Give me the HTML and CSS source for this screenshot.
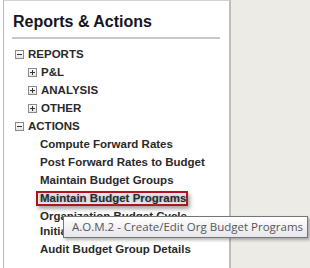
FILE: index.html
```html
<!DOCTYPE html>
<html lang="en">
<head>
    <meta charset="UTF-8">
    <title>Reports &amp; Actions</title>
    <link rel="stylesheet" href="styles.css">
</head>
<body>
    <div class="layout">
        <div class="sidebar">
            <h1>Reports &amp; Actions</h1>

            <ul class="tree">
                <li>
                    <div class="node"><span class="toggle minus"></span>REPORTS</div>
                    <ul>
                        <li><div class="node"><span class="toggle plus"></span>P&amp;L</div></li>
                        <li><div class="node"><span class="toggle plus"></span>ANALYSIS</div></li>
                        <li><div class="node"><span class="toggle plus"></span>OTHER</div></li>
                    </ul>
                </li>
                <li>
                    <div class="node"><span class="toggle minus"></span>ACTIONS</div>
                    <ul class="actions">
                        <li><a href="#">Compute Forward Rates</a></li>
                        <li><a href="#">Post Forward Rates to Budget</a></li>
                        <li><a href="#">Maintain Budget Groups</a></li>
                        <li class="has-tip">
                            <a href="#" class="selected">Maintain Budget Programs</a>
                            <div class="tooltip">A.O.M.2 - Create/Edit Org Budget Programs</div>
                        </li>
                        <li><a href="#">Organization Budget Cycle Initiation</a></li>
                        <li><a href="#">Audit Budget Group Details</a></li>
                    </ul>
                </li>
            </ul>
        </div>
        <div class="main"></div>
    </div>
</body>
</html>
```

FILE: styles.css
```css
html,
body {
    height: 100%;
}

body {
    margin: 0;
    padding-left: 3px;
    background-color: #fff;
    font-family: "Liberation Sans", Arial, sans-serif;
    color: #222;
}

.layout {
    display: flex;
    height: 100%;
}

.sidebar {
    width: 208px;
    padding: 0 9px 0 8px;
    border-left: 1px solid #b8b8b8;
    border-top: 1px solid #d4d4d4;
    border-right: 2px solid #bdbdbd;
    box-sizing: content-box;
}

.main {
    flex: 1;
    background-color: #ecebe6;
}

h1 {
    margin: 0;
    padding: 11px 0 6px 1px;
    font-size: 16px;
    line-height: 19px;
    font-weight: bold;
    color: #15151f;
    border-bottom: 2px solid #c8c8c8;
}

.tree,
.tree ul {
    list-style: none;
    margin: 0;
    padding: 0;
}

.tree {
    margin-top: 6px;
    font-size: 11.5px;
    font-weight: bold;
    color: #2a2a2a;
}

.tree ul {
    padding-left: 13px;
}

.node {
    display: flex;
    align-items: center;
    height: 18px;
    padding-left: 3px;
}

/* plus / minus boxes */
.toggle {
    position: relative;
    width: 7px;
    height: 7px;
    margin-right: 4px;
    border: 1px solid #8a8a8a;
    background: linear-gradient(#fff, #e4e4e4);
}

.toggle::before,
.toggle::after {
    content: "";
    position: absolute;
    background-color: #333;
}

.toggle::before {
    left: 1px;
    top: 3px;
    width: 5px;
    height: 1px;
}

.plus::after {
    left: 3px;
    top: 1px;
    width: 1px;
    height: 5px;
}

.tree .actions {
    padding-left: 28px;
}

.actions li {
    display: flex;
    align-items: center;
    padding: 1.5px 0;
    line-height: 15px;
}

.actions a {
    color: #2a2a2a;
    text-decoration: none;
    padding-right: 10px;
}

.has-tip {
    position: relative;
}

.actions a.selected {
    margin-left: -4px;
    padding: 0 0 0 2px;
    border: 2px solid #b3121c;
    background-color: #e9e9ee;
    text-shadow: 0 0 3px #9a9aa8;
    box-shadow: 2px 3px 4px rgba(0, 0, 0, 0.35);
    line-height: 11px;
}

.tooltip {
    position: absolute;
    left: 23px;
    top: 27px;
    width: 235px;
    padding: 2px 0 3px 8px;
    border: 1px solid #767676;
    background: linear-gradient(#ffffff, #e6e6ec);
    box-shadow: 2px 2px 3px rgba(0, 0, 0, 0.3);
    font-family: "Open Sans", "Noto Sans", sans-serif;
    font-weight: normal;
    font-size: 11.5px;
    line-height: 15px;
    color: #575757;
    white-space: nowrap;
    z-index: 2;
}
```
